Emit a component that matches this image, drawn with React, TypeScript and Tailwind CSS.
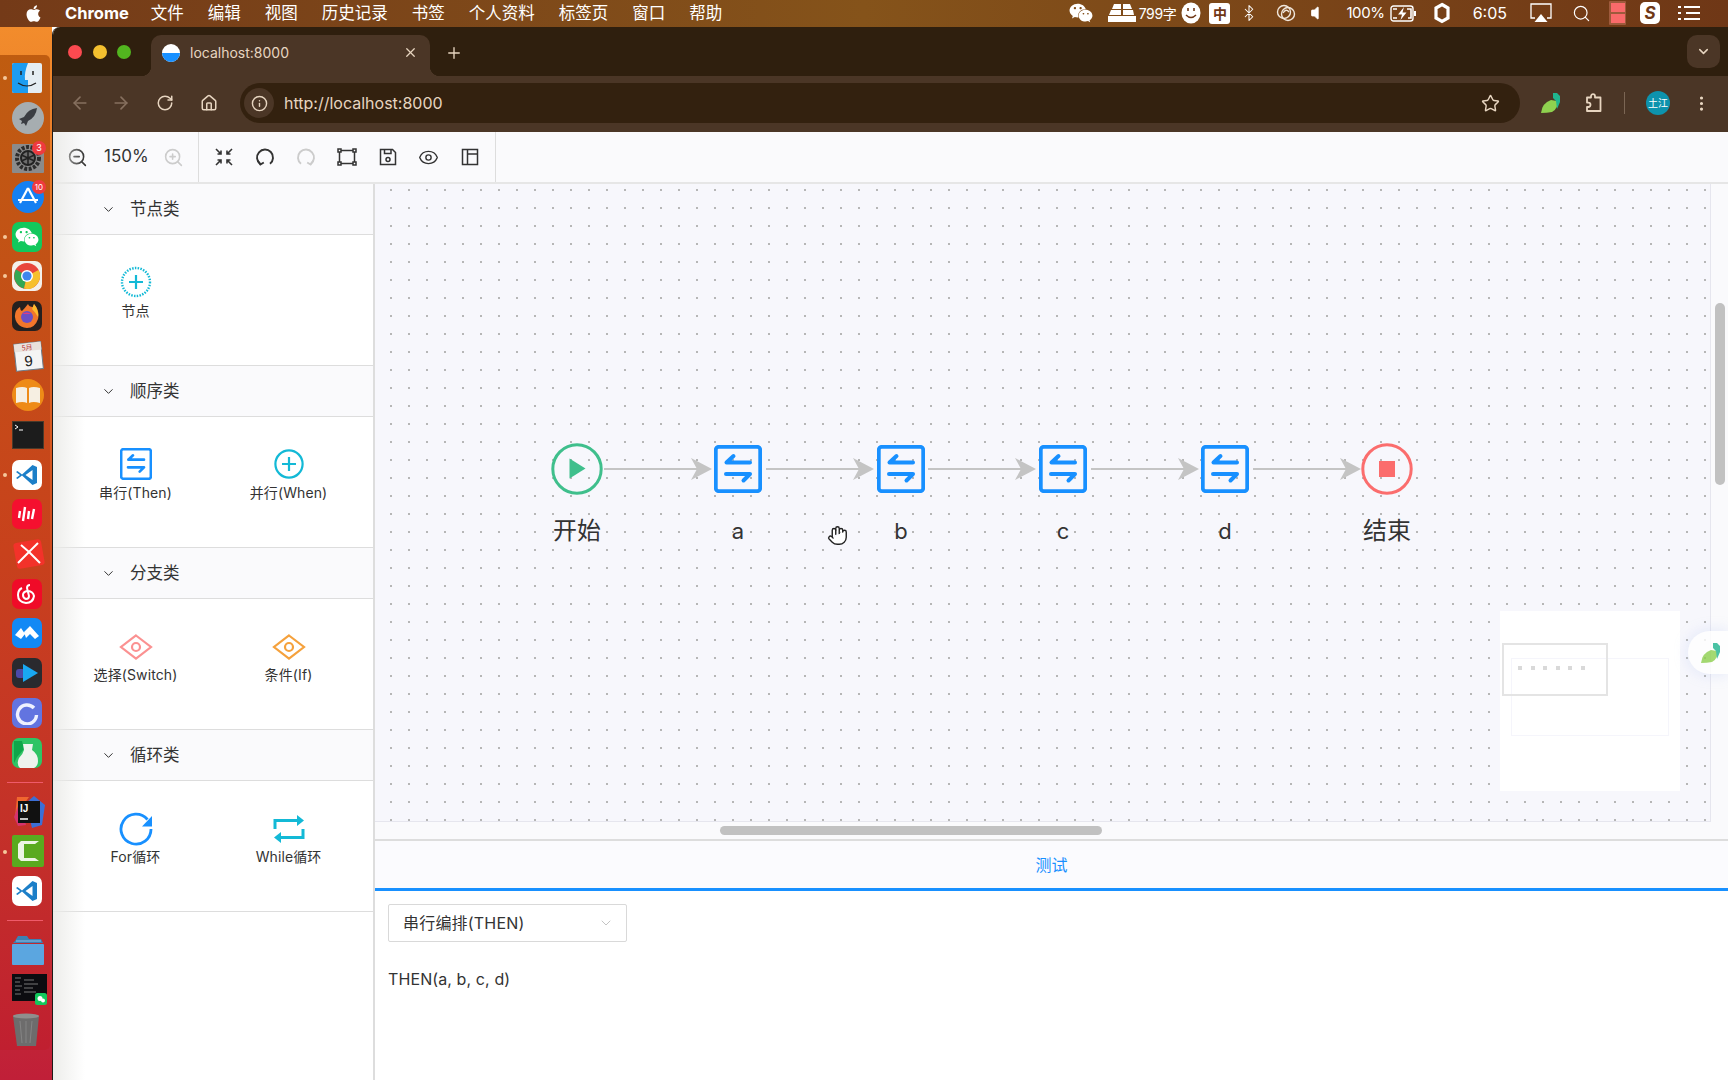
import React from 'react';
import {
  ArrowLeft, ArrowRight, Bluetooth, ChevronDown, EllipsisVertical, Eye, Hand, House, Info, Plus,
  RotateCw, Search, Star, Volume, X, ZoomIn, ZoomOut,
} from 'lucide-react';
import { FaApple, FaWeixin } from 'react-icons/fa';

/* ---------- flow icons ---------- */
const ThenIcon = ({ size = 32 }: { size?: number }) => (
  <svg width={size} height={size} viewBox="0 0 48 48" fill="none" stroke="#1890ff" strokeLinecap="round" strokeLinejoin="round">
    <rect x="1.8" y="1.8" width="44.4" height="44.4" rx="3" strokeWidth="3.8" />
    <path d="M12.5 17.5h23.5M12.5 17.5l7-6.5M12 29h24M36 29l-6.5 6.5" strokeWidth="4" />
  </svg>
);

const NodeIcon = () => (
  <svg width="32" height="32" viewBox="0 0 32 32" fill="none" stroke="#13b9d6">
    <circle cx="16" cy="16" r="14" strokeWidth="2.4" strokeDasharray="1.5 1.3" />
    <path d="M16 9v14M9 16h14" strokeWidth="2.2" />
  </svg>
);

const WhenIcon = () => (
  <svg width="32" height="32" viewBox="0 0 32 32" fill="none" stroke="#13b9d6" strokeWidth="2.2">
    <circle cx="16" cy="16" r="13.6" />
    <path d="M16 9v14M9 16h14" />
  </svg>
);

const DiamondIcon = ({ color }: { color: string }) => (
  <svg width="34" height="26" viewBox="0 0 34 26" fill="none" stroke={color} strokeWidth="2.2" className="mt-[2px]">
    <path d="M17 1.5 32 13 17 24.5 2 13Z" />
    <circle cx="17" cy="13" r="4" />
  </svg>
);

const ForIcon = () => (
  <svg width="34" height="34" viewBox="0 0 34 34" fill="none" className="mt-[2px]">
    <path d="M28.5 7.5A15 15 0 1 0 32 17" stroke="#1890ff" strokeWidth="2.8" />
    <path d="M33 4v10.5H23Z" fill="#1890ff" />
  </svg>
);

const WhileIcon = () => (
  <svg width="32" height="30" viewBox="0 0 32 30" fill="none" className="mt-[2px]">
    <path d="M2 15V6.5h24M30 15v8.5H6" stroke="#13b9d6" strokeWidth="3" />
    <path d="M24 1l7 5.5-7 5.5ZM8 18l-7 5.5L8 29Z" fill="#13b9d6" />
  </svg>
);

const StartIcon = () => (
  <svg width="52" height="52" viewBox="0 0 52 52" fill="none">
    <circle cx="26" cy="26" r="24.2" stroke="#3fbf8c" strokeWidth="3" />
    <path d="M18.5 15.5 34.5 25.5 18.5 35.5Z" fill="#3fbf8c" />
  </svg>
);

const EndIcon = () => (
  <svg width="52" height="52" viewBox="0 0 52 52" fill="none">
    <circle cx="26" cy="26" r="24.2" stroke="#fb6d6d" strokeWidth="3" />
    <rect x="18" y="18" width="16" height="16" fill="#fb6d6d" />
  </svg>
);

/* ---------- toolbar icons ---------- */
const FitIcon = () => (
  <svg width="20" height="20" viewBox="0 0 20 20" fill="none" stroke="#333" strokeWidth="1.6">
    <path d="M2 2l5 5M7 3.5V7H3.5M18 2l-5 5M13 3.5V7h3.5M2 18l5-5M7 16.5V13H3.5M18 18l-5-5M13 16.5V13h3.5" />
  </svg>
);

const UndoIcon = ({ color = '#333', flip = false }: { color?: string; flip?: boolean }) => (
  <svg width="20" height="20" viewBox="0 0 20 20" fill="none" stroke={color} strokeWidth="1.9" className={flip ? '-scale-x-100' : ''}>
    <path d="M5.3 17A8 8 0 1 1 15 16.8" />
    <path d="M2.7 13.5l2.7 4 3.4-2" />
  </svg>
);

const SelectBoxIcon = () => (
  <svg width="20" height="18" viewBox="0 0 20 18" fill="none" stroke="#333" strokeWidth="1.5">
    <rect x="2.5" y="2.5" width="15" height="13" />
    <rect x="1" y="1" width="3" height="3" fill="#fff" />
    <rect x="16" y="1" width="3" height="3" fill="#fff" />
    <rect x="1" y="14" width="3" height="3" fill="#fff" />
    <rect x="16" y="14" width="3" height="3" fill="#fff" />
  </svg>
);

const SaveIcon = () => (
  <svg width="18" height="18" viewBox="0 0 18 18" fill="none" stroke="#333" strokeWidth="1.5">
    <path d="M1.5 1.5h12l3 3v12h-15Z" />
    <path d="M5.5 1.5v4h6.5v-4" />
    <circle cx="9" cy="11.5" r="2" />
  </svg>
);

const LayoutIcon = () => (
  <svg width="18" height="18" viewBox="0 0 18 18" fill="none" stroke="#333" strokeWidth="1.5">
    <rect x="1.5" y="1.5" width="15" height="15" />
    <path d="M6.5 1.5v15M6.5 6h10" />
  </svg>
);

/* ---------- dock icons ---------- */
const Finder = () => (
  <svg width="30" height="30" viewBox="0 0 30 30">
    <rect width="30" height="30" rx="2" fill="#e4edf3" />
    <path d="M0 2a2 2 0 0 1 2-2h14q-4 10-3 17h3v13H2a2 2 0 0 1-2-2Z" fill="#1d9cf0" />
    <path d="M9 8v4M21 8v4" stroke="#222" strokeWidth="1.5" />
    <path d="M6 20q9 6 18 0" fill="none" stroke="#222" strokeWidth="1.2" />
  </svg>
);
const Rocket = () => (
  <svg width="32" height="32" viewBox="0 0 32 32">
    <circle cx="16" cy="16" r="16" fill="#a6adb0" />
    <path d="M25 6q-9 1-13 9l-5 2 3 2-1 3 3-1 2 3 2-5q8-4 9-13Z" fill="#3a3d42" />
  </svg>
);
const Settings = () => (
  <svg width="38" height="32" viewBox="0 0 38 32">
    <rect y="3" width="32" height="29" rx="1" fill="#8b8b8b" />
    <circle cx="16" cy="17" r="11" fill="none" stroke="#2c2c2c" strokeWidth="4" strokeDasharray="3 1.5" />
    <circle cx="16" cy="17" r="7" fill="#6d6d6d" stroke="#222" strokeWidth="2" />
    <path d="M16 10v14M9.5 20l13-6M9.5 14l13 6" stroke="#222" strokeWidth="1.6" />
    <circle cx="27" cy="7" r="7" fill="#ee3a3f" />
    <text x="27" y="10" fontSize="9" fill="#fff" textAnchor="middle">3</text>
  </svg>
);
const AppStore = () => (
  <svg width="38" height="33" viewBox="0 0 38 33">
    <circle cx="16" cy="17" r="16" fill="#1580f2" />
    <path d="M16 8l8 15M16 8 8 23M6 20h20" stroke="#fff" strokeWidth="2.2" fill="none" />
    <circle cx="27" cy="7" r="7" fill="#ee3a3f" />
    <text x="27" y="10" fontSize="8" fill="#fff" textAnchor="middle">10</text>
  </svg>
);
const Wechat = () => (
  <div className="flex h-[30px] w-[30px] items-center justify-center rounded-[7px] bg-[#12c85c]">
    <FaWeixin className="text-[24px] text-white" />
  </div>
);
const ChromeApp = () => (
  <div className="flex h-[30px] w-[30px] items-center justify-center rounded-[7px] bg-[#f4f0ea]">
    <svg width="26" height="26" viewBox="0 0 26 26">
      <circle cx="13" cy="13" r="13" fill="#e8453c" />
      <path d="M13 13 2 6.5A13 13 0 0 0 10 25.6Z" fill="#32a853" />
      <path d="M13 13l11.5-6A13 13 0 0 1 10 25.6Z" fill="#f6c02c" />
      <circle cx="13" cy="13" r="6" fill="#fff" />
      <circle cx="13" cy="13" r="4.6" fill="#3f86ee" />
    </svg>
  </div>
);
const Firefox = () => (
  <div className="flex h-[30px] w-[30px] items-center justify-center rounded-[7px] bg-[#25201f]">
    <svg width="26" height="26" viewBox="0 0 26 26">
      <path d="M13 25a12 12 0 0 1-11-17q2-3 4-4 0 3 2 4 3-3 6-7 1 3 5 3l1-3q6 7 4 15-3 9-11 9Z" fill="#f2762b" />
      <path d="M20 1q5 6 4 13-3-5-6-8Z" fill="#fdbb2d" />
      <circle cx="13" cy="14" r="6" fill="#6b4fc4" />
      <path d="M8 11q5-3 9 0-5 0-9 0Z" fill="#e23e7c" />
    </svg>
  </div>
);
const Calendar = () => (
  <svg width="32" height="32" viewBox="0 0 32 32">
    <g transform="rotate(-6 16 16)">
      <rect x="3" y="3" width="27" height="27" fill="#f4f4f4" stroke="#6b7d8c" />
      <rect x="3" y="3" width="27" height="8" fill="#e9e1dc" />
      <text x="16" y="10" fontSize="7" fill="#b33" textAnchor="middle" fontFamily="Noto Sans CJK SC">5月</text>
      <text x="16" y="26" fontSize="15" fill="#222" textAnchor="middle" fontFamily="Liberation Sans">9</text>
    </g>
  </svg>
);
const Books = () => (
  <svg width="32" height="32" viewBox="0 0 32 32">
    <circle cx="16" cy="16" r="16" fill="#ee8b17" />
    <path d="M4 9q7-2 11 0v15q-4-2-11 0ZM28 9q-7-2-11 0v15q4-2 11 0Z" fill="#f6efe2" />
  </svg>
);
const Terminal = () => (
  <svg width="32" height="28" viewBox="0 0 32 28">
    <rect x="0.5" y="0.5" width="31" height="27" fill="#1c1c1c" stroke="#4a3a2a" />
    <path d="M3 4l3 2-3 2M7 9h4" stroke="#fff" strokeWidth="1" fill="none" />
  </svg>
);
const VsCode = () => (
  <div className="flex h-[30px] w-[30px] items-center justify-center rounded-[7px] bg-white">
    <svg width="24" height="24" viewBox="0 0 24 24" fill="none">
      <path d="M17.5 2 22 4v16l-4.5 2L7 12.5 2.5 16 1 15l4-3-4-3 1.5-1L7 11.5Z" fill="#1c7fc8" />
      <path d="M17.5 7v10L10.5 12Z" fill="#fff" />
    </svg>
  </div>
);
const Dianping = () => (
  <div className="flex h-[30px] w-[30px] items-center justify-center rounded-[7px] bg-[#f5102f]">
    <svg width="22" height="16" viewBox="0 0 22 16" stroke="#fff" strokeWidth="2.4">
      <path d="M4 5 3 12M9 1 7 15M13 5l-1 8M18 3l-2 10" />
    </svg>
  </div>
);
const XApp = () => (
  <svg width="34" height="32" viewBox="0 0 34 32">
    <rect x="3" y="3" width="28" height="26" rx="3" fill="#f3322a" transform="rotate(-10 17 16)" />
    <path d="M6 25 17 14 28 25M9 7l8 7 9-9" stroke="#fff" strokeWidth="2" fill="none" />
  </svg>
);
const Netease = () => (
  <div className="flex h-[30px] w-[30px] items-center justify-center rounded-[7px] bg-[#f00b28]">
    <svg width="22" height="22" viewBox="0 0 22 22" fill="none" stroke="#fff" strokeWidth="2">
      <path d="M14 2q-3 0-3 3l2 8q0 3-3 3-3-1-3-4 0-3 4-4 6 0 7 5-1 7-8 7-8-1-8-8 0-5 4-7" />
    </svg>
  </div>
);
const Lark = () => (
  <div className="flex h-[30px] w-[30px] items-center justify-center rounded-[7px] bg-[#1289f5]">
    <svg width="24" height="14" viewBox="0 0 24 14" fill="#fff">
      <path d="M0 9 6 2l4 6-4 5ZM9 6l6-6 9 10-4 3-5-5-4 4Z" />
    </svg>
  </div>
);
const Player = () => (
  <div className="flex h-[30px] w-[30px] items-center justify-center rounded-[7px] bg-[#2a2a2e]">
    <svg width="24" height="20" viewBox="0 0 24 20">
      <rect x="1" y="6" width="9" height="9" rx="3" fill="#4c4aa8" />
      <path d="M8 1l15 9-15 9Z" fill="#19a8f2" />
    </svg>
  </div>
);
const Ring = () => (
  <div className="flex h-[30px] w-[30px] items-center justify-center rounded-[7px] bg-[#6274e0]">
    <svg width="24" height="24" viewBox="0 0 24 24" fill="none" stroke="#eef1ff" strokeWidth="3.4">
      <path d="M19 7a9.5 9.5 0 1 0 2.5 7" />
    </svg>
  </div>
);
const Vase = () => (
  <div className="flex h-[30px] w-[30px] items-end justify-center overflow-hidden rounded-[7px] bg-[#2fc465]">
    <svg width="26" height="27" viewBox="0 0 26 27">
      <path d="M0 0h8l2 8-7 8L0 22Z" fill="#0fa64a" />
      <path d="M9 3h10l-1 6q6 4 6 11 0 5-4 7H6q-4-4-1-10 4-4 5-8Z" fill="#eef3ee" />
    </svg>
  </div>
);
const Idea = () => (
  <svg width="34" height="34" viewBox="0 0 34 34">
    <path d="M5 2h12L3 22Z" fill="#f0672f" />
    <path d="M2 22 8 6l6 24-8 1Z" fill="#d6336c" />
    <path d="M22 1l11 9-3 20-10 3L14 8Z" fill="#3b6fd6" />
    <rect x="6" y="6" width="22" height="22" fill="#111" />
    <text x="8" y="17" fontSize="10" fontWeight="700" fill="#fff" fontFamily="Liberation Sans">IJ</text>
    <path d="M8 24h8" stroke="#fff" strokeWidth="1.5" />
  </svg>
);
const Camtasia = () => (
  <svg width="32" height="32" viewBox="0 0 32 32">
    <rect width="32" height="32" rx="2" fill="#5aaa1f" />
    <path d="M27 6H9L6 9v14l3 3h18l-4-3H12V9h11Z" fill="#edf4e4" />
  </svg>
);
const Folder = () => (
  <svg width="32" height="30" viewBox="0 0 32 30">
    <path d="M3 6 6 1h9l2 3h12l2 4H1Z" fill="#3c80b4" />
    <rect x="0" y="9" width="32" height="21" rx="1" fill="#5ba6e0" />
    <path d="M4 6h25" stroke="#8cc0e6" strokeWidth="1" />
  </svg>
);
const Shot = () => (
  <svg width="36" height="32" viewBox="0 0 36 32">
    <rect width="35" height="27" fill="#0c0c10" />
    <path d="M3 4h6M3 8h5M3 12h7M3 16h5M3 20h6M12 6h10M12 10h14M12 14h9M12 18h12" stroke="#777" strokeWidth="1" />
    <rect x="23" y="19" width="12" height="12" rx="2.5" fill="#13c85d" />
    <circle cx="28" cy="24.5" r="2.5" fill="#fff" />
    <circle cx="31" cy="26.5" r="2" fill="#fff" />
  </svg>
);
const Trash = () => (
  <svg width="28" height="34" viewBox="0 0 28 34">
    <path d="M1 3h26l-3 30H5Z" fill="#6d6c6c" />
    <ellipse cx="14" cy="3" rx="13" ry="2.5" fill="#8f8e8d" />
    <path d="M8 8l2 22M14 8v22M20 8l-2 22" stroke="#8a8a8a" strokeWidth="0.8" />
  </svg>
);

const DockItem = ({ dot, children }: { dot?: boolean; children: React.ReactNode }) => (
  <div className="relative flex h-[39.7px] w-full items-center pl-[12px]">
    {dot && <span className="absolute left-[3px] top-[18px] h-[4px] w-[4px] rounded-full bg-[#f5c79a]" />}
    {children}
  </div>
);

const DockSep = () => (
  <div className="flex h-[19.5px] items-center px-[7px]">
    <div className="h-[1px] w-full bg-[#ef5a6a]" />
  </div>
);

const Dock = () => (
  <aside className="w-[52px] shrink-0 bg-gradient-to-b from-[#f28c2c] via-[#d04a1e] to-[#c01f38] pt-[28px]">
    <div className="h-[995px] w-[50px] rounded-r-[5px] bg-gradient-to-b from-[#bf5c10] via-[#c8411c] to-[#c01f30] pt-[3px]">
      <DockItem dot><Finder /></DockItem>
      <DockItem><Rocket /></DockItem>
      <DockItem><Settings /></DockItem>
      <DockItem><AppStore /></DockItem>
      <DockItem dot><Wechat /></DockItem>
      <DockItem dot><ChromeApp /></DockItem>
      <DockItem><Firefox /></DockItem>
      <DockItem><Calendar /></DockItem>
      <DockItem><Books /></DockItem>
      <DockItem><Terminal /></DockItem>
      <DockItem dot><VsCode /></DockItem>
      <DockItem><Dianping /></DockItem>
      <DockItem><XApp /></DockItem>
      <DockItem><Netease /></DockItem>
      <DockItem><Lark /></DockItem>
      <DockItem><Player /></DockItem>
      <DockItem><Ring /></DockItem>
      <DockItem><Vase /></DockItem>
      <DockSep />
      <DockItem><Idea /></DockItem>
      <DockItem dot><Camtasia /></DockItem>
      <DockItem><VsCode /></DockItem>
      <DockSep />
      <DockItem><Folder /></DockItem>
      <DockItem><Shot /></DockItem>
      <DockItem><Trash /></DockItem>
    </div>
  </aside>
);

/* ---------- menu bar ---------- */
const MenuBar = () => (
  <header className="flex h-[27px] shrink-0 items-center bg-gradient-to-r from-[#743a18] via-[#85531a] to-[#6f3716] pb-[1px] text-white">
    <FaApple className="ml-[24px] text-[19px]" />
    <span className="ml-[22px] text-[16.5px] font-bold">Chrome</span>
    <nav className="ml-[22px] flex gap-[24px] text-[16.5px]">
      {['文件', '编辑', '视图', '历史记录', '书签', '个人资料', '标签页', '窗口', '帮助'].map((m) => (
        <span key={m}>{m}</span>
      ))}
    </nav>
    <div className="ml-auto flex items-center pr-[28px]">
      <FaWeixin className="text-[24px]" />
      <svg width="28" height="18" viewBox="0 0 28 18" fill="#fff" className="ml-[15px]">
        <path d="M6 0h7v5H4ZM15 0h7l2 5h-9ZM3 6h10v5H1ZM15 6h10l1 5H15ZM0 12h28v6H0Z" />
      </svg>
      <span className="ml-[3px] text-[14px] tracking-tight">799字</span>
      <svg width="20" height="22" viewBox="0 0 20 22" className="ml-[5px]">
        <ellipse cx="10" cy="11" rx="9.5" ry="10.5" fill="#fff" />
        <path d="M7 6v3M13 6v3" stroke="#6f3716" strokeWidth="1.6" />
        <path d="M5 13q5 5 10 0" fill="none" stroke="#6f3716" strokeWidth="1.5" />
      </svg>
      <span className="ml-[8px] flex h-[21px] w-[21px] items-center justify-center rounded-[3px] bg-white text-[14px] font-bold text-[#6f3716]">中</span>
      <Bluetooth className="ml-[10px]" size={18} strokeWidth={1.4} />
      <svg width="22" height="22" viewBox="0 0 22 22" fill="none" stroke="#f1e7dc" strokeWidth="1.4" className="ml-[17px]">
        <circle cx="9" cy="10" r="6.5" />
        <circle cx="13" cy="12" r="6.5" />
        <path d="M8 11q3-5 6-1" />
      </svg>
      <Volume className="ml-[13px] fill-white" size={18} strokeWidth={1} />
      <span className="ml-[18px] text-[15px] tracking-tight">100%</span>
      <svg width="28" height="17" viewBox="0 0 28 17" fill="none" stroke="#fff" strokeWidth="1.4" className="ml-[5px]">
        <rect x="1" y="1" width="22" height="15" rx="2.5" />
        <path d="M25 6v5" strokeWidth="2" />
        <path d="M14 2 8 9.5h4l-1.5 5.5 6-7.5h-4Z" fill="#fff" stroke="none" />
        <path d="M3 4h4M3 13h4M17 4h4v9h-3" strokeWidth="1.6" />
      </svg>
      <svg width="16" height="22" viewBox="0 0 16 22" fill="none" stroke="#fff" strokeWidth="3.2" className="ml-[16px]">
        <path d="M8 2.5 14 6v10l-6 3.5L2 16V6Z" />
      </svg>
      <span className="ml-[23px] text-[16px]">6:05</span>
      <svg width="22" height="20" viewBox="0 0 22 20" className="ml-[23px]">
        <path d="M5 15H1V1h20v14h-4" fill="none" stroke="#fff" strokeWidth="1.3" />
        <path d="M11 11l6.5 8h-13Z" fill="#fff" />
      </svg>
      <Search className="ml-[20px]" size={19} strokeWidth={1.5} />
      <div className="ml-[18px] flex h-[24px] w-[17px] flex-col gap-[2px] rounded-[1px] bg-[#9e5a3c] px-[1.5px] py-[2px]">
        <span className="flex-1 bg-[#f96a6a]" />
        <span className="flex-1 bg-[#f96a6a]" />
      </div>
      <span className="ml-[14px] flex h-[22px] w-[20px] items-center justify-center rounded-[5px] bg-white text-[17px] font-bold italic leading-none text-[#6f3716]">S</span>
      <svg width="22" height="16" viewBox="0 0 22 16" stroke="#fff" strokeWidth="2" className="ml-[18px]">
        <path d="M0 2h3M6 2h16M0 8h3M8 8h14M0 14h3M6 14h16" />
      </svg>
    </div>
  </header>
);

/* ---------- browser chrome ---------- */
const LeafLogo = ({ size = 22 }: { size?: number }) => (
  <svg width={size} height={size} viewBox="0 0 22 22">
    <path d="M1 21Q2 11 11 8l6 1q2 7-5 11Q7 21 1 21Z" fill="#8fd14f" />
    <path d="M13 1h4l3 3v6l-3 7-1-8-3-3Z" fill="#1fb58f" />
  </svg>
);

const ExtensionIcon = () => (
  <svg width="20" height="20" viewBox="0 0 20 20" fill="none" stroke="currentColor" strokeWidth="1.8" strokeLinejoin="round">
    <path d="M3 4.5h4V3.2a2 2 0 0 1 4 0v1.3h5.5V18H3v-4h1.3a2.2 2.2 0 0 0 0-4.4H3Z" />
  </svg>
);

const BrowserChrome = () => (
  <div className="shrink-0">
    <div className="flex h-[49px] items-end bg-[#2f1f0e] pl-[15px] text-[#e7d5c0]">
      <div className="flex gap-[10.5px] self-center">
        <span className="h-[14px] w-[14px] rounded-full bg-[#fb4a50]" />
        <span className="h-[14px] w-[14px] rounded-full bg-[#f4c02f]" />
        <span className="h-[14px] w-[14px] rounded-full bg-[#52b51f]" />
      </div>
      <div className="relative ml-[20px] flex h-[41px] w-[279px] items-center rounded-t-[10px] bg-[#4b3626] pb-[6px] pl-[10px] pr-[12px]">
        <span className="absolute bottom-0 left-[-10px] h-[10px] w-[10px] bg-[radial-gradient(circle_at_0_0,#2f1f0e_10px,#4b3626_10.5px)]" />
        <span className="absolute bottom-0 right-[-10px] h-[10px] w-[10px] bg-[radial-gradient(circle_at_100%_0,#2f1f0e_10px,#4b3626_10.5px)]" />
        <svg width="18" height="18" viewBox="0 0 18 18" className="ml-[1px]">
          <circle cx="9" cy="9" r="9" fill="#fff" />
          <path d="M0 9h18a9 9 0 0 1-18 0Z" fill="#1890ff" />
        </svg>
        <span className="ml-[10px] text-[14px]">localhost:8000</span>
        <X className="ml-auto" size={15} strokeWidth={2} />
      </div>
      <Plus className="mb-[14px] ml-[15px]" size={18} strokeWidth={1.8} />
      <div className="mb-[8px] ml-auto mr-[8px] flex h-[33px] w-[33px] items-center justify-center rounded-[10px] bg-[#4b3626]">
        <ChevronDown size={15} strokeWidth={2.4} />
      </div>
    </div>
    <div className="flex h-[56px] items-center bg-[#4b3626] pb-[2px] text-[#e7d5c0]">
      <ArrowLeft className="ml-[17px] text-[#86705f]" size={20} strokeWidth={2} />
      <ArrowRight className="ml-[21px] text-[#86705f]" size={20} strokeWidth={2} />
      <RotateCw className="ml-[25px]" size={18} strokeWidth={2} />
      <House className="ml-[26px]" size={18} strokeWidth={2} />
      <div className="ml-[22px] flex h-[40px] w-[1280px] items-center rounded-full bg-[#33210f] pl-[4px] pr-[20px]">
        <span className="flex h-[30px] w-[30px] items-center justify-center rounded-full bg-[#4b3626]">
          <Info size={17} strokeWidth={2} />
        </span>
        <span className="ml-[10px] text-[16px]">http://localhost:8000</span>
        <Star className="ml-auto" size={19} strokeWidth={1.8} />
      </div>
      <div className="ml-[20px]"><LeafLogo /></div>
      <span className="ml-[22px]"><ExtensionIcon /></span>
      <span className="ml-[20px] h-[22px] w-[1px] bg-[#7b6654]" />
      <span className="ml-[21px] flex h-[24px] w-[24px] items-center justify-center rounded-full bg-[#0d93ad] text-[10px] text-white">土江</span>
      <EllipsisVertical className="ml-[22px]" size={19} strokeWidth={2} />
    </div>
  </div>
);

/* ---------- app ---------- */
const ToolButton = ({ children }: { children: React.ReactNode }) => (
  <span className="flex h-[22px] w-[41px] items-center justify-center text-[#333]">{children}</span>
);

const Toolbar = () => (
  <div className="flex h-[52px] shrink-0 border-b-2 border-[#e6e6e6] bg-[#fafafc]">
    <div className="flex w-[146px] items-center border-r border-[#dddddd] pl-[14px]">
      <ZoomOut size={21} strokeWidth={1.8} className="text-[#333]" />
      <span className="ml-[16px] text-[17px] text-[#333]">150%</span>
      <ZoomIn size={21} strokeWidth={1.8} className="ml-[14px] text-[#cccccc]" />
    </div>
    <div className="flex w-[297px] items-center border-r border-[#dddddd] pl-[4px]">
      <ToolButton><FitIcon /></ToolButton>
      <ToolButton><UndoIcon /></ToolButton>
      <ToolButton><UndoIcon color="#cccccc" flip /></ToolButton>
      <ToolButton><SelectBoxIcon /></ToolButton>
      <ToolButton><SaveIcon /></ToolButton>
      <ToolButton><Eye size={21} strokeWidth={1.6} /></ToolButton>
      <ToolButton><LayoutIcon /></ToolButton>
    </div>
  </div>
);

interface PaletteItem {
  label: string;
  icon: React.ReactNode;
}

const sections: { title: string; items: PaletteItem[] }[] = [
  { title: '节点类', items: [{ label: '节点', icon: <NodeIcon /> }] },
  {
    title: '顺序类',
    items: [
      { label: '串行(Then)', icon: <ThenIcon /> },
      { label: '并行(When)', icon: <WhenIcon /> },
    ],
  },
  {
    title: '分支类',
    items: [
      { label: '选择(Switch)', icon: <DiamondIcon color="#fb9191" /> },
      { label: '条件(If)', icon: <DiamondIcon color="#f5a13c" /> },
    ],
  },
  {
    title: '循环类',
    items: [
      { label: 'For循环', icon: <ForIcon /> },
      { label: 'While循环', icon: <WhileIcon /> },
    ],
  },
];

const Sidebar = () => (
  <aside className="w-[322px] shrink-0 border-r-2 border-[#dddddd] bg-white">
    {sections.map((s) => (
      <section key={s.title}>
        <div className="flex h-[51px] items-center border-b border-[#dddddd] bg-[#fafafc] pl-[48px] text-[16.5px] text-[#333]">
          <ChevronDown size={15} strokeWidth={1.6} />
          <span className="ml-[14px]">{s.title}</span>
        </div>
        <div className="grid h-[131px] grid-cols-2 content-start border-b border-[#dddddd] pl-[6px] pr-[8px] pt-[31px]">
          {s.items.map((it) => (
            <div key={it.label} className="flex flex-col items-center">
              <div className="flex h-[32px] items-center justify-center">{it.icon}</div>
              <span className="mt-[3px] text-[14px] leading-[20px] tracking-[0.1px] text-[#333]">{it.label}</span>
            </div>
          ))}
        </div>
      </section>
    ))}
  </aside>
);

const nodes = [
  { label: '开始', pos: 'left-[172px]', icon: <StartIcon />, text: 'text-[24px]' },
  { label: 'a', pos: 'left-[333px]', icon: <ThenIcon size={48} />, text: 'text-[22px]' },
  { label: 'b', pos: 'left-[496px]', icon: <ThenIcon size={48} />, text: 'text-[22px]' },
  { label: 'c', pos: 'left-[658px]', icon: <ThenIcon size={48} />, text: 'text-[22px]' },
  { label: 'd', pos: 'left-[820px]', icon: <ThenIcon size={48} />, text: 'text-[22px]' },
  { label: '结束', pos: 'left-[982px]', icon: <EndIcon />, text: 'text-[24px]' },
];

const edges = ['left-[229px]', 'left-[391px]', 'left-[553px]', 'left-[716px]', 'left-[878px]'];

const Edge = ({ pos }: { pos: string }) => (
  <svg width="108" height="24" viewBox="0 0 108 24" className={`absolute top-[273px] ${pos}`}>
    <path d="M0 12h96" stroke="#c4c4c4" strokeWidth="2" />
    <path d="M108 12 87 1l6 11-6 11Z" fill="#c4c4c4" />
  </svg>
);

const Minimap = () => (
  <div className="absolute left-[1125px] top-[427px] h-[180px] w-[180px] bg-white">
    <div className="absolute left-[11px] top-[47px] h-[78px] w-[158px] border border-[#f5f5fb]">
      <div className="ml-[6px] mt-[7px] flex gap-[8.5px]">
        {[0, 1, 2, 3, 4, 5].map((i) => (
          <span key={i} className="h-[4px] w-[4px] bg-[#d9d9d9]" />
        ))}
      </div>
    </div>
    <div className="absolute left-[2px] top-[32px] h-[53px] w-[106px] border-2 border-[#e4e4e4]" />
  </div>
);

const Canvas = () => (
  <div className="flex h-[657px] shrink-0 border-b-2 border-[#dddddd] bg-[#fafafc]">
    <div className="flex min-w-0 flex-1 flex-col">
      <div className="relative h-[638px] shrink-0 overflow-hidden border-b border-r border-[#e6e6ee] bg-[#f7f7fc] bg-[radial-gradient(circle_at_center,#b5b5b5_0.7px,transparent_1.2px)] bg-[position:7px_-3px] bg-[size:18px_18px]">
        {edges.map((e) => (
          <Edge key={e} pos={e} />
        ))}
        {nodes.map((n) => (
          <div key={n.label} className={`absolute top-[259px] flex w-[60px] flex-col items-center ${n.pos}`}>
            <div className="flex h-[52px] items-center justify-center">{n.icon}</div>
            <span className={`mt-[20px] whitespace-nowrap leading-[32px] text-[#333] ${n.text}`}>{n.label}</span>
          </div>
        ))}
        <Hand className="absolute left-[452px] top-[341px] fill-white text-[#222]" size={21} strokeWidth={1.6} />
        <Minimap />
      </div>
      <div className="flex h-[17px] items-center pl-[345px]">
        <div className="h-[9px] w-[382px] rounded-full bg-[#c1c1c1]" />
      </div>
    </div>
    <div className="w-[17px] shrink-0 pl-[4px] pt-[119px]">
      <div className="h-[182px] w-[10px] rounded-full bg-[#c1c1c1]" />
    </div>
  </div>
);

const TestPanel = () => (
  <div className="flex-1 bg-white">
    <div className="flex h-[50px] items-center justify-center border-b-[3px] border-[#1890ff] bg-[#fbfbfe] text-[16px] text-[#1890ff]">
      测试
    </div>
    <div className="px-[13px] pt-[13px]">
      <div className="flex h-[38px] w-[239px] items-center justify-between rounded-[2px] border border-[#d9d9d9] pl-[14px] pr-[12px] text-[16px] tracking-[0.2px] text-[#333]">
        <span>串行编排(THEN)</span>
        <ChevronDown size={16} strokeWidth={1.4} className="text-[#bfbfbf]" />
      </div>
      <p className="mt-[25px] text-[16px] leading-[24px] tracking-[0.1px] text-[#333]">THEN(a, b, c, d)</p>
    </div>
  </div>
);

const App: React.FC = () => {
  return (
    <div className='flex h-screen w-screen flex-col overflow-hidden font-[Inter,"Noto_Sans_CJK_SC",sans-serif]'>
      <MenuBar />
      <div className="flex min-h-0 flex-1">
        <Dock />
        <div className="relative flex min-w-0 flex-1 flex-col overflow-hidden rounded-tl-[8px] border-l border-[#1d1a18] bg-white">
          <BrowserChrome />
          <Toolbar />
          <div className="flex min-h-0 flex-1">
            <Sidebar />
            <main className="relative flex min-w-0 flex-1 flex-col">
              <Canvas />
              <TestPanel />
              {/* floating helper tab */}
              <div className="absolute right-0 top-[447px] flex h-[43px] w-[40px] items-center rounded-l-full bg-white pl-[12px] opacity-80 shadow-[0_0_14px_rgba(170,190,240,0.35)]">
                <LeafLogo />
              </div>
            </main>
          </div>
          {/* dock shadow over the page */}
          <div className="pointer-events-none absolute bottom-0 left-0 top-[105px] w-[32px] bg-gradient-to-r from-[#ebebe8]/90 to-transparent" />
        </div>
      </div>
    </div>
  );
};

export default App;
